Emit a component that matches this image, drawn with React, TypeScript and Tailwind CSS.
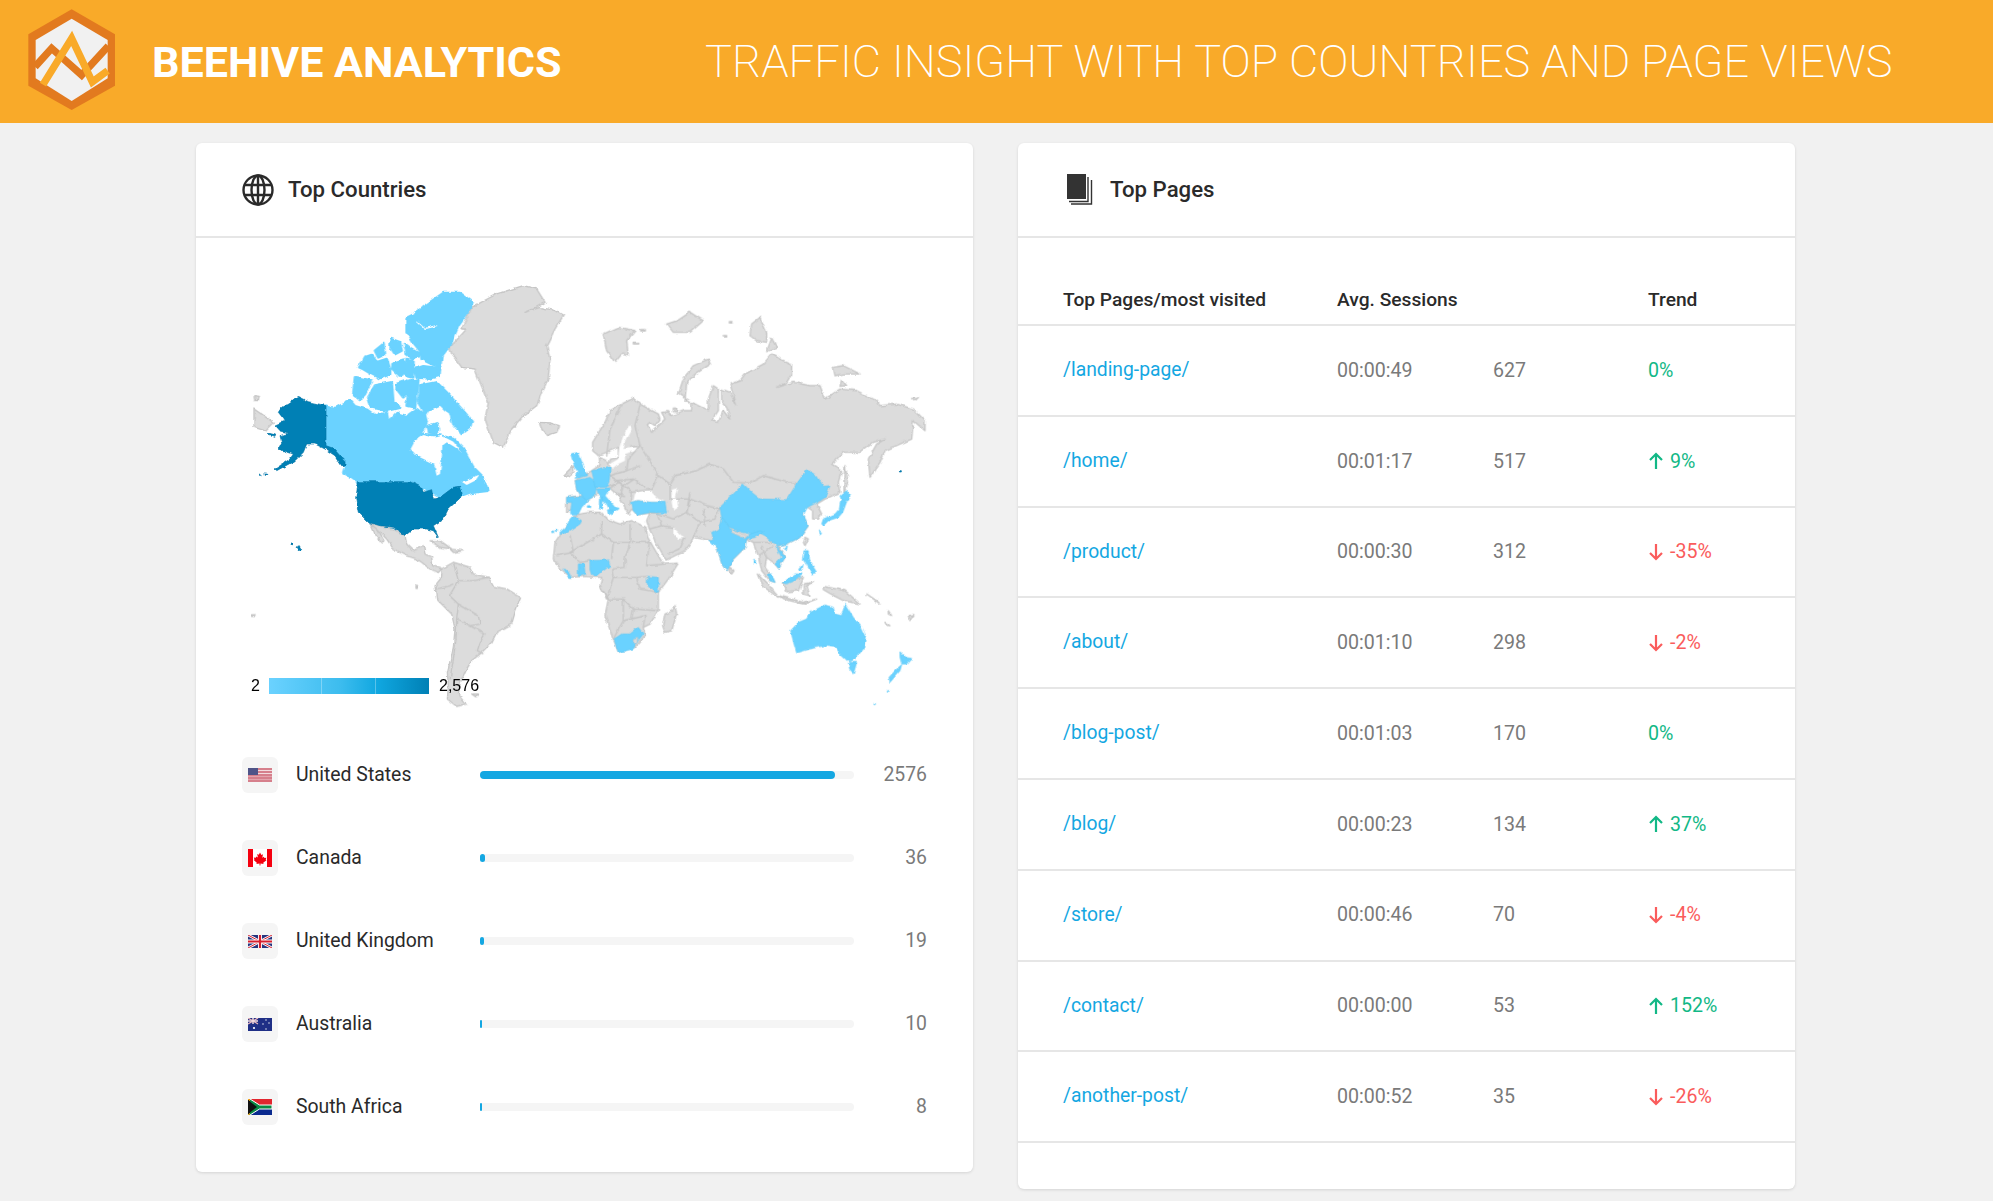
import { ReactNode } from 'react'

type Page = { path: string; time: string; sessions: number; trend: number }

const countries = [
  { name: 'United States', value: 2576, bar: 355, flag: 'us' },
  { name: 'Canada', value: 36, bar: 5, flag: 'ca' },
  { name: 'United Kingdom', value: 19, bar: 4, flag: 'uk' },
  { name: 'Australia', value: 10, bar: 2, flag: 'au' },
  { name: 'South Africa', value: 8, bar: 2, flag: 'za' },
]

const pages: Page[] = [
  { path: '/landing-page/', time: '00:00:49', sessions: 627, trend: 0 },
  { path: '/home/', time: '00:01:17', sessions: 517, trend: 9 },
  { path: '/product/', time: '00:00:30', sessions: 312, trend: -35 },
  { path: '/about/', time: '00:01:10', sessions: 298, trend: -2 },
  { path: '/blog-post/', time: '00:01:03', sessions: 170, trend: 0 },
  { path: '/blog/', time: '00:00:23', sessions: 134, trend: 37 },
  { path: '/store/', time: '00:00:46', sessions: 70, trend: -4 },
  { path: '/contact/', time: '00:00:00', sessions: 53, trend: 152 },
  { path: '/another-post/', time: '00:00:52', sessions: 35, trend: -26 },
]

function Logo() {
  return (
    <svg viewBox="0 0 330 369" className="w-[110px] h-[123px] shrink-0">
      <path d="M170 28 300 103V257L170 330 40 257V103Z" fill="#e27a1f" />
      <path d="M170 56 278 120V235L170 303 62 235V120Z" fill="#f1f1f1" />
      <path d="M60 200 110 145 200 225 280 138" fill="none" stroke="#e27a1f" strokeWidth="22" />
      <path d="M84 254 170 115 232 246 278 212" fill="none" stroke="#f9aa29" strokeWidth="22" />
    </svg>
  )
}

function GlobeIcon() {
  return (
    <svg viewBox="0 0 32 32" className="w-8 h-8 shrink-0" fill="none" stroke="#2a2a2a" strokeWidth="2.4">
      <circle cx="16" cy="16" r="14.5" />
      <ellipse cx="16" cy="16" rx="6.5" ry="14.5" />
      <path d="M16 1.500v29M2.500 11h27M2.500 21h27" />
    </svg>
  )
}

function PagesIcon() {
  return (
    <svg viewBox="0 0 26 31" className="w-[26px] h-[31px] shrink-0" fill="none" stroke="#333">
      <rect x="0" y="0" width="19" height="25" fill="#333" stroke="none" />
      <path d="M21 3v24.500H2" strokeWidth="1.4" />
      <path d="M24.500 6v24H4" strokeWidth="1.4" />
    </svg>
  )
}

function Flag({ code }: { code: string }) {
  if (code === 'us')
    return (
      <svg viewBox="0 0 24 14" className="w-6 h-[14px]">
        <rect width="24" height="14" fill="#e3a3ac" />
        <path d="M0 1h24M0 4h24M0 7h24M0 10h24M0 13h24" stroke="#c95c6c" strokeWidth="1" />
        <path d="M10 2.500h14M10 5.500h14" stroke="#f3dcdf" strokeWidth="1" />
        <rect width="10" height="7" fill="#4f5488" />
      </svg>
    )
  if (code === 'ca')
    return (
      <svg viewBox="0 0 24 18" className="w-6 h-[18px]">
        <rect width="24" height="18" fill="#fff" />
        <rect width="5" height="18" fill="#f5000f" />
        <rect x="19" width="5" height="18" fill="#f5000f" />
        <path d="M12 3.500 13.400 6l1.600-.8-.7 3.500 1.600-1 .5 1.300 2-.3-.7 2 .8.5-3.300 2.500.4 1.300-3.100-.4-.1 2h-.8l-.1-2-3.100.4.4-1.300L5.700 11l.8-.5-.7-2 2 .3.5-1.300 1.600 1-.7-3.500 1.600.8Z" fill="#f5000f" />
      </svg>
    )
  if (code === 'uk')
    return (
      <svg viewBox="0 0 24 13" className="w-6 h-[13px]">
        <rect width="24" height="13" fill="#27357f" />
        <path d="M0 0 24 13M24 0 0 13" stroke="#fff" strokeWidth="2.6" />
        <path d="M0 0 24 13M24 0 0 13" stroke="#d8202f" strokeWidth="1" />
        <path d="M12 0v13M0 6.500h24" stroke="#fff" strokeWidth="4" />
        <path d="M12 0v13M0 6.500h24" stroke="#d8202f" strokeWidth="2.200" />
      </svg>
    )
  if (code === 'au')
    return (
      <svg viewBox="0 0 24 13" className="w-6 h-[13px]">
        <rect width="24" height="13" fill="#1f2f86" />
        <path d="M0 0 10 6M10 0 0 6" stroke="#e9b6bd" strokeWidth="1.300" />
        <path d="M5 0v6M0 3h10" stroke="#f3dadd" strokeWidth="1.500" />
        <circle cx="6" cy="10" r="1.100" fill="#fff" />
        <circle cx="18" cy="2" r=".7" fill="#fff" />
        <circle cx="21" cy="5" r=".7" fill="#fff" />
        <circle cx="15" cy="6" r=".7" fill="#fff" />
        <circle cx="18" cy="11" r=".7" fill="#fff" />
      </svg>
    )
  return (
    <svg viewBox="0 0 24 16" className="w-6 h-4">
      <rect width="24" height="8" fill="#e2262f" />
      <rect y="8" width="24" height="8" fill="#0a2a8f" />
      <path d="M0 0 11 8 0 16" fill="#111" stroke="#f2b81c" strokeWidth="1.200" />
      <path d="M2 0 11.500 6H24v4H11.500L2 16" fill="#0a8a45" stroke="#fff" strokeWidth="1" />
      <path d="M0 1 9 8 0 15Z" fill="#111" />
    </svg>
  )
}

function WorldMap() {
  return (
    <svg viewBox="0 0 2100 1320" className="block w-[700px] h-[440px]">
      <defs>
        {/* roughens the hand-traced coastlines */}
        <filter id="coast" filterUnits="userSpaceOnUse" x="0" y="0" width="2100" height="1320">
          <feTurbulence type="fractalNoise" baseFrequency="0.05" numOctaves="3" seed="4" />
          <feDisplacementMap in="SourceGraphic" scale="11" xChannelSelector="R" yChannelSelector="G" />
        </filter>
      </defs>
      <g filter="url(#coast)">
        {/* gray land, traced in 3x coordinates of the map area */}
        <g fill="#dcdcdc" stroke="#c6c6c6" strokeWidth="4" strokeLinejoin="round">
          <path d="M770 45 850 20 890 30 915 70 880 90 855 100 900 85 945 95 970 110 945 150 920 200 930 240 925 300 905 340 890 380 850 410 815 450 790 505 760 490 735 420 745 370 720 310 705 270 665 265 635 225 630 205 680 150 665 150 695 85Z" />
          <path d="M897 430 930 432 958 440 950 460 920 470 905 450Z" />
          <path d="M42 350 58 352 55 362 44 362Z M42 390 100 430 75 455 42 445Z" />
          <path d="M972 588 1000 560 1002 578 985 592Z" />
          <g transform="translate(1050,0)">
            <path d="M8 490 20 470 45 430 60 395 95 375 130 358 155 378 205 405 210 420 195 440 180 430 172 437 185 460 215 430 225 420 215 400 235 398 245 410 280 395 305 395 305 370 355 395 355 360 370 320 385 330 385 395 365 425 385 430 400 395 420 420 410 385 395 370 395 330 420 340 440 380 420 315 450 305 465 285 520 255 545 225 570 240 605 255 605 285 590 310 560 325 610 310 660 320 690 320 705 360 750 330 800 335 860 365 870 380 920 375 970 390 1005 425 1005 455 970 425 965 480 930 495 885 515 870 550 840 595 835 540 860 495 885 480 850 490 810 520 760 520 725 555 755 575 745 610 750 640 705 660 680 675 695 705 685 720 668 720 668 695 645 680 640 710 655 740 630 775 590 795 565 800 585 835 565 868 550 850 530 835 525 865 555 910 540 905 515 875 505 830 490 790 470 780 465 805 425 845 412 875 395 850 382 810 365 785 310 775 300 795 285 815 228 843 218 825 195 785 178 750 170 725 180 702 142 708 125 690 115 705 100 675 85 650 60 628 15 650 -10 665 -70 702 -70 655 -25 650 -40 630 -45 605 5 575 30 558 28 535 50 545 55 558 62 540 85 535 85 505 25 530 8 515Z" />
            <path d="M355 240 362 255 320 282 290 310 285 365 300 368 265 345 280 300 310 260Z" />
            <path d="M40 165 85 145 135 155 110 185 115 230 95 225 75 250 50 215Z" />
            <path d="M230 135 262 125 300 100 340 125 300 160 250 160Z" />
            <path d="M485 135 510 115 530 160 530 190 500 185 480 170Z M545 178 560 205 530 218Z" />
            <path d="M730 265 760 260 810 285 760 285 735 290Z M755 302 770 320 750 322Z M965 355 985 355 975 365Z" />
            <path d="M765 560 775 610 762 640 762 590Z" />
            <path d="M418 128h8v4h-8Z M400 170h10v4h-10Z M152 152h14v4h-14Z M130 190h16v5h-16Z M250 390h10v8h-10Z" />
          </g>
          <g transform="translate(1050,660)">
            {/* africa */}
            <path d="M-85 100-60 70-50 50-30 45 0 40 30 40 45 55 75 70 90 75 125 65 168 85 173 115 205 170 220 195 265 192 235 240 205 280 205 335 180 375 160 385 165 410 135 445 85 460 70 420 45 350 55 300 30 260 35 235 10 235-15 232-60 235-85 215-110 180-105 130Z" />
            <path d="M255 320 260 345 245 395 225 400 218 380 225 345 250 335Z" />
            <path d="M645 115 655 120 645 140 640 130Z M420 205 432 215 425 225 418 215Z" />
            {/* indonesia and the pacific */}
            <path d="M505 225 530 250 565 295 550 285 520 262Z M565 290 640 310 680 300 640 315 580 300Z" />
            <path d="M580 250 620 240 640 235 625 275 590 278Z M640 255 670 250 650 262 660 290 640 285Z" />
            <path d="M700 262 765 275 810 315 760 305 735 292 700 272Z" />
            <path d="M830 285 870 315 860 305Z M895 335 905 350 895 345Z M885 370 900 380 890 378Z M955 350 972 347 960 365Z" />
          </g>
          <g transform="translate(0,660)">
            {/* central and south america */}
            <path d="M390 72 420 80 460 90 495 110 500 135 520 155 550 140 555 165 575 175 578 200 605 210 595 220 570 210 545 190 530 180 500 170 460 150 440 120 415 95Z" />
            <path d="M392 75 410 90 432 125 425 130 405 105Z" />
            <path d="M570 125 600 125 635 150 600 145Z M630 150 670 155 640 160Z M528 255 535 265 528 265Z M35 347h10v5h-10Z" />
            <path d="M605 210 640 190 690 205 700 225 745 235 760 262 800 270 842 295 825 340 815 375 770 400 755 430 720 465 695 485 680 510 660 555 655 585 680 615 650 622 622 600 625 560 622 520 640 445 645 390 635 345 590 300 585 260 605 235Z" />
            <path d="M695 585h20l-8 8Z" />
          </g>
        </g>

        {/* seas cut out of the land */}
        <g fill="#fff" transform="translate(1050,0)">
          <path d="M150 635 180 635 205 660 225 667 180 667 142 662 130 667 135 645Z" />
          <path d="M245 635 265 630 258 650 265 685 250 695 245 670Z" />
          <path d="M250 745 275 770 285 775 265 780 250 765Z" />
          <path d="M118 438 125 450 108 480 100 510 140 505 140 515 105 525 105 545 85 555 65 570 60 555 85 540 88 505 100 470Z" />
        </g>

        {/* borders */}
        <g fill="none" stroke="#c6c6c6" strokeWidth="4" strokeLinejoin="round">
          <g transform="translate(1050,0)">
            <path d="M240 615 255 590 320 575 360 555 400 570 430 610 480 612 520 590 590 610 620 612" />
            <path d="M150 378 135 440 150 500 120 505M95 380 60 450 50 530M150 500 205 590 185 630 125 640 90 610 60 590M60 590 100 620 90 660M205 590 240 615 240 660 300 660 350 680 395 690" />
            <path d="M90 610 50 625M125 640 120 680M60 628 85 610M300 660 290 700 250 720 200 702 180 702M200 702 215 740 250 745M290 700 330 730 375 720 390 685M310 775 330 730" />
            <path d="M215 740 178 750M285 775 270 810 235 825M430 800 470 780M490 790 545 790M515 800 530 835M505 830 550 800" />
            <path d="M60 590 110 575 150 560M75 605 130 600 165 625M100 620 130 600M70 640 105 650M150 500 115 540 110 575M290 700 300 640M340 690 345 740" />
          </g>
          <g transform="translate(1050,660)">
            <path d="M35 65 35 105 70 130 65 180M120 75 120 130 70 130M180 130 120 130 105 180 105 205 65 210M178 130 170 200 225 195M-60 110-50 160-100 170M35 105-60 160-30 190 0 185" />
            <path d="M65 210 70 235 140 235 150 270 205 280M70 235 50 300 100 300 130 330 205 335M100 300 100 365 70 420M130 330 125 360 165 350 160 385M100 365 165 350M30 260 50 300M140 235 172 232" />
          </g>
          <g transform="translate(0,660)">
            <path d="M640 190 655 245 628 290 655 315 650 360 648 420 640 480 630 540M655 245 700 245 745 235M655 315 715 350 720 375 690 380 650 360M690 380 735 405 720 430 712 455 730 465M585 270 615 265 640 255" />
          </g>
        </g>

        {/* light countries */}
        <g fill="#6bd2ff" stroke="#6bd2ff" strokeWidth="8" strokeLinejoin="round">
          <path d="M258 380 285 388 330 365 345 382 380 392 405 410 440 402 445 428 470 402 500 412 530 390 555 410 560 430 545 465 600 470 640 480 670 510 700 565 725 590 745 635 700 640 670 650 660 622 640 625 600 655 575 640 545 625 510 608 355 608 330 590 310 580 320 550 280 510 258 500Z" />
          <path d="M527 100 570 70 610 42 660 42 697 70 680 105 655 140 640 175 630 200 605 230 600 265 575 255 545 240 540 215 520 190 500 160 500 120 520 110Z" />
          <path d="M525 270 550 262 600 268 598 290 570 298 530 295Z M452 180 480 190 485 215 465 225 452 205Z M495 195 515 210 540 225 520 240 500 225Z M405 215 430 195 435 225 415 235Z" />
          <path d="M345 295 395 305 375 345 360 360 340 345Z M405 320 455 310 460 370 480 385 440 395 395 385 385 355Z M358 265 375 235 395 228 410 250 440 240 450 270 450 285 420 298 395 285 370 270Z" />
          <path d="M458 255 490 245 500 280 480 290 458 270Z M500 240 520 245 520 295 500 290Z M470 315 500 305 500 345 490 355 470 330Z M508 305 535 303 530 345 525 385 500 380 505 345Z" />
          <path d="M540 320 590 310 620 340 660 385 695 425 690 445 665 465 640 435 630 400 595 380 565 390 555 405 535 370 540 345Z" />
        </g>
        <g fill="#fff">
          <path d="M512 510 525 485 550 468 575 475 590 475 605 470 640 488 665 520 645 505 620 490 607 500 605 540 600 585 590 590 582 555 530 530Z" />
          <path d="M580 390 600 380 630 410 625 445 600 465 580 450 575 425Z" />
          <path d="M665 608 690 600 715 590 705 605 680 618Z" />
        </g>
        <path d="M530 125 555 148 590 140" fill="none" stroke="#fff" strokeWidth="4" />
        <g fill="#6bd2ff" stroke="#5cc8f6" strokeWidth="2" strokeLinejoin="round">
          <path d="M560 440 590 430 600 450 590 465 565 462Z" />
          <g transform="translate(930,480)">
            <path d="M62 45 85 40 90 55 100 80 110 110 75 118 85 100 75 85 70 70Z" />
            <path d="M75 125 120 115 140 130 135 170 110 185 95 172 80 150Z" />
            <path d="M50 175 95 172 110 185 95 205 85 225 62 225 65 190 50 190Z" />
            <path d="M125 95 180 85 178 125 170 145 135 145 130 115Z" />
            <path d="M140 150 178 150 165 170 195 205 205 208 185 225 170 195 150 175Z M148 180 160 178 158 210 148 210Z M172 212 190 215 175 225Z M112 200h10v6h-10Z" />
            <path d="M245 190 265 185 300 190 345 190 350 222 300 220 262 228 250 215Z" />
            <path d="M70 230 95 245 90 255 60 275 50 282 28 282 50 262 60 240Z M5 276h6v5H5Z M16 272h6v5h-6Z" />
          </g>
          <g transform="translate(1050,0)">
            <path d="M425 650 460 615 485 640 510 660 590 662 620 615 650 572 680 590 700 622 720 620 705 655 690 665 652 685 640 708 655 740 630 775 590 795 565 800 545 790 530 775 510 765 480 765 440 755 420 745 395 715 390 685Z" />
          </g>
          <g transform="translate(1050,660)">
            <path d="M395 55 415 80 420 90 470 115 480 105 510 95 520 100 495 115 470 120 465 145 425 185 412 215 395 190 382 150 358 125 370 125 365 100 385 90Z" />
            <path d="M560 140 585 175 565 208 555 195 575 175 565 155Z M580 150 592 140 590 155Z M490 182h6v12h-6Z" />
            <path d="M695 75 700 60 735 45 748 30 752 5 770 8 758 40 745 55 715 65 700 80Z M750 -10 770 -25 780 -10 775 5 755 5Z M688 95 695 100 690 105Z" />
            <path d="M645 155 655 155 655 180 680 220 665 225 650 195 640 180Z M625 212 640 195 635 215Z" />
            <path d="M535 225 545 225 555 250 540 245Z M580 250 615 225 640 225 615 245 590 255Z" />
            <path d="M602 395 625 370 650 360 660 340 705 318 730 325 735 345 755 350 765 315 790 355 815 385 827 410 820 450 795 480 775 488 745 460 735 445 700 440 660 450 620 462 612 435Z" />
            <path d="M775 490 800 490 790 525 780 515Z" />
            <path d="M930 458 945 475 965 478 950 495 935 495 930 475Z M935 497 930 515 900 550 897 535 920 510Z M892 575h6v5h-6Z M852 613h4v4h-4Z" />
            <path d="M0 185 55 183 60 200 40 215 20 232 5 225 0 210Z" />
            <path d="M172 232 205 235 205 280 185 270 172 255Z" />
            <path d="M72 420 95 405 120 405 145 385 160 405 140 430 130 450 85 460Z" />
            <path d="M-35 195-18 195-15 225-35 232Z M-78 210-65 215-55 235-65 235Z" />
          </g>
        </g>
        <g transform="translate(1050,660)" fill="#dcdcdc" stroke="#c6c6c6" strokeWidth="2">
          <path d="M130 422 143 418 140 432 130 432Z" />
          <path d="M422 90 470 110 465 118 425 100Z" />
        </g>

        {/* dark countries */}
        <g fill="#0080b5" stroke="#0074a6" strokeWidth="2" strokeLinejoin="round">
          <path d="M172 352 205 368 258 380 258 500 280 508 300 530 318 548 318 558 305 560 285 530 255 510 225 495 200 495 190 520 165 545 110 575 105 570 150 540 160 525 130 515 115 510 125 490 120 470 145 462 120 455 105 438 135 425 115 400 125 385 150 370Z" />
          <path d="M85 462 107 468 105 475 90 470Z M55 585h8v4h-8Z M72 582h8v4h-8Z" />
          <path d="M355 608 510 608 545 625 550 640 575 632 580 660 600 655 640 625 662 622 668 650 625 690 610 720 580 740 595 775 580 755 560 750 520 750 495 770 460 745 420 740 385 730 355 700 347 660Z" />
          <path d="M153 792h6v5h-6Z M168 804 178 800 185 812 175 815Z" />
          <path d="M1978 575h6v4h-6Z" />
        </g>
      </g>
    </svg>
  )
}

function Legend() {
  return (
    <div className="absolute left-[11px] top-[399px] flex items-center h-4 font-['Liberation_Sans',sans-serif] text-base leading-none text-black">
      <span className="w-[18px]">2</span>
      <div className="w-[160px] h-4 bg-[linear-gradient(90deg,#6bd2ff_0%,#3cbcee_45%,#10a7e0_68%,#0080b5_100%)] flex">
        <div className="w-[53px] h-4 border-r border-white/30" />
        <div className="w-[54px] h-4 border-r border-white/30" />
      </div>
      <span className="ml-[10px]">2,576</span>
    </div>
  )
}

function TopCountries() {
  return (
    <section className="w-[777px] h-[1029px] bg-white rounded-md shadow-[0_1px_3px_rgba(0,0,0,0.12)]">
      <header className="h-[95px] flex items-center gap-[14px] pl-[46px] border-b-2 border-[#e6e6e6]">
        <GlobeIcon />
        <h2 className="text-[22.2px] font-medium text-[#2a2a2a]">Top Countries</h2>
      </header>
      <div className="pt-[41px] pl-[44px]">
        <div className="relative w-[700px]">
          <WorldMap />
          <Legend />
        </div>
      </div>
      <ul className="mt-[38px] pl-[46px] pr-[46px] flex flex-col gap-[47px]">
        {countries.map((c) => (
          <li key={c.name} className="flex items-center h-9">
            <span className="w-9 h-9 rounded-md bg-[#f5f5f5] flex items-center justify-center shrink-0">
              <Flag code={c.flag} />
            </span>
            <span className="w-[202px] pl-[18px] text-[19.4px] text-[#2a2a2a] shrink-0">{c.name}</span>
            <div className="w-[374px] h-2 rounded-full bg-[#f5f5f5] shrink-0">
              <div className="h-2 rounded-full bg-[#14a7e2]" style={{ width: c.bar }} />
            </div>
            <span className="flex-1 text-right text-[19.4px] text-[#7a7a7a]">{c.value}</span>
          </li>
        ))}
      </ul>
    </section>
  )
}

function Trend({ value }: { value: number }) {
  if (value === 0) return <span className="text-[#12b886]">0%</span>
  const up = value > 0
  return (
    <span className={up ? 'flex items-center gap-[6px] text-[#12b886]' : 'flex items-center gap-[6px] text-[#fa5c5c]'}>
      <svg viewBox="0 0 16 18" className="w-4 h-[18px]" fill="none" stroke="currentColor" strokeWidth="2.2">
        {up ? <path d="M8 17V2M2 8l6-6 6 6" /> : <path d="M8 1v15M2 10l6 6 6-6" />}
      </svg>
      {value}%
    </span>
  )
}

function Row({ children, head }: { children: ReactNode; head?: boolean }) {
  return (
    <div
      className={
        head
          ? 'grid grid-cols-[274px_156px_155px_1fr] items-end h-[88px] pb-[9px] px-[45px] border-b-2 border-[#e6e6e6] text-[19.2px] font-medium text-[#2a2a2a]'
          : 'grid grid-cols-[274px_156px_155px_1fr] items-center h-[90.8px] px-[45px] border-b-2 border-[#e6e6e6] text-[19.6px] text-[#7a7a7a]'
      }
    >
      {children}
    </div>
  )
}

function TopPages() {
  return (
    <section className="w-[777px] h-[1046px] bg-white rounded-md shadow-[0_1px_3px_rgba(0,0,0,0.12)]">
      <header className="h-[95px] flex items-center gap-[17px] pl-[49px] border-b-2 border-[#e6e6e6]">
        <PagesIcon />
        <h2 className="text-[22.2px] font-medium text-[#2a2a2a]">Top Pages</h2>
      </header>
      <Row head>
        <span>Top Pages/most visited</span>
        <span>Avg. Sessions</span>
        <span />
        <span>Trend</span>
      </Row>
      {pages.map((p) => (
        <Row key={p.path}>
          <span className="text-[19.3px] text-[#14a7e2]">{p.path}</span>
          <span>{p.time}</span>
          <span>{p.sessions}</span>
          <Trend value={p.trend} />
        </Row>
      ))}
    </section>
  )
}

export default function App() {
  return (
    <div className="min-h-[1201px] bg-[#f1f1f1] font-['Roboto',sans-serif]">
      <header className="h-[123px] bg-[#f9aa29] flex items-center pl-[15px] text-white">
        <Logo />
        <h1 className="ml-[27px] mt-[2px] w-[553px] text-[43.1px] font-bold leading-none">BEEHIVE ANALYTICS</h1>
        <p className="text-[45.15px] font-extralight leading-none whitespace-nowrap">TRAFFIC INSIGHT WITH TOP COUNTRIES AND PAGE VIEWS</p>
      </header>
      <main className="mt-5 pr-[2px] flex justify-center gap-[45px] items-start">
        <TopCountries />
        <TopPages />
      </main>
    </div>
  )
}
